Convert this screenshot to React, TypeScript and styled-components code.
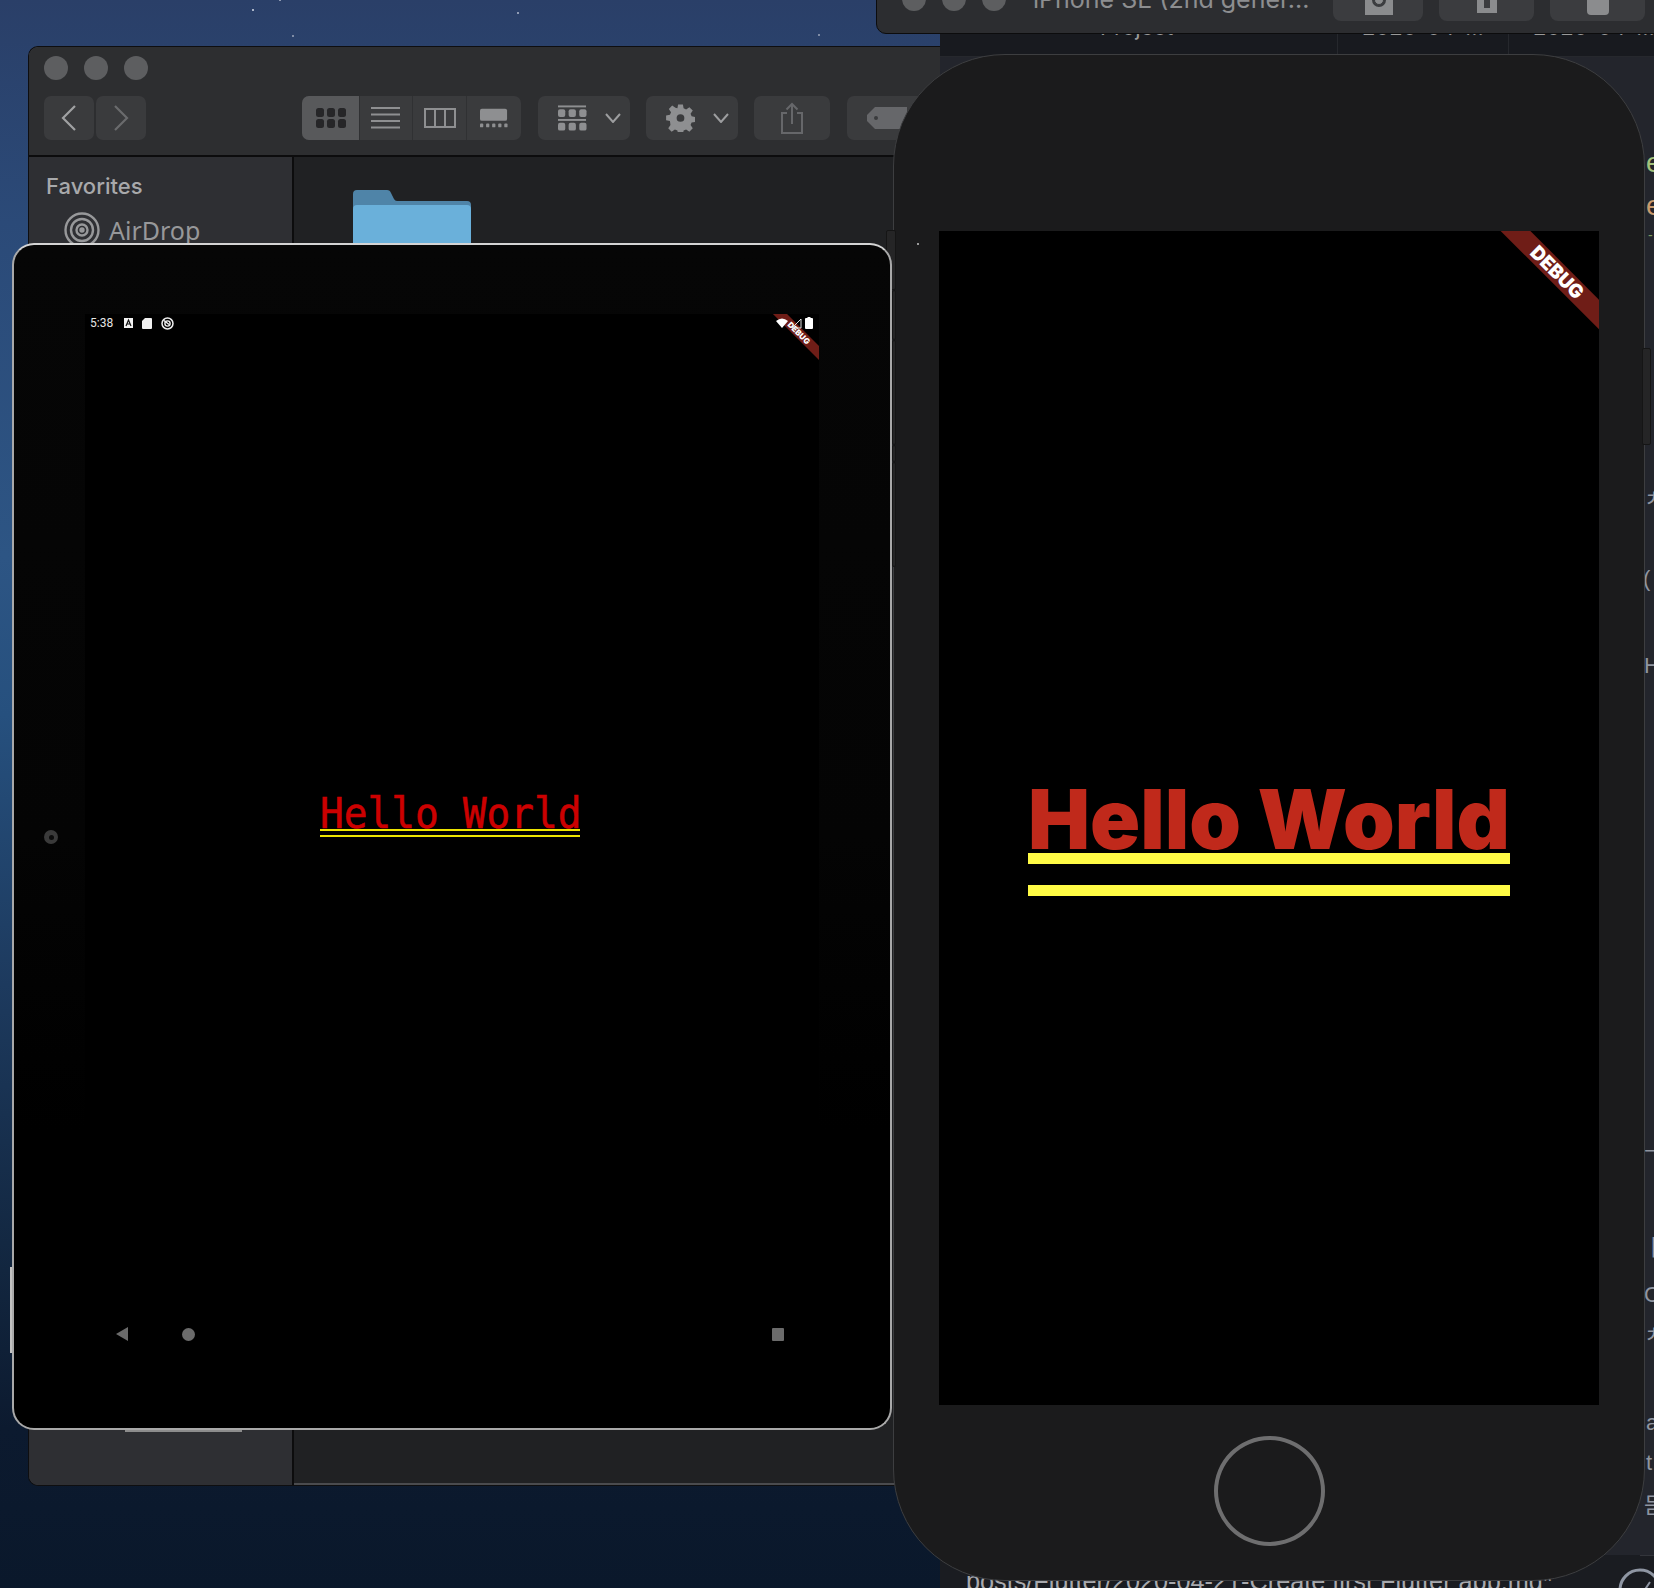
import React from "react";
import styled, { createGlobalStyle } from "styled-components";

const Global = createGlobalStyle`
  html, body { margin: 0; padding: 0; background: #0c192c; }
  body { font-family: "Inter", "Liberation Sans", sans-serif; }
`;

const Desktop = styled.div`
  position: relative;
  width: 1654px;
  height: 1588px;
  overflow: hidden;
  background:
    radial-gradient(circle at 253px 10px, #aab4c8 1px, transparent 1.5px),
    radial-gradient(circle at 518px 13px, #8f9bb3 1px, transparent 1.5px),
    radial-gradient(circle at 293px 36px, #7f8ca6 1px, transparent 1.5px),
    radial-gradient(circle at 819px 35px, #7f8ca6 1px, transparent 1.5px),
    radial-gradient(circle at 280px 0px, #8f9bb3 1px, transparent 1.5px),
    linear-gradient(180deg, #2a3f68 0%, #2b4a78 14%, #2d5584 35%, #26507e 45%, #1d3a5e 62%, #12263f 80%, #0c1a2f 90%, #0a182b 100%);
`;

/* ---------- Editor behind ---------- */
const EditorWindow = styled.div`
  position: absolute;
  left: 940px;
  top: 20px;
  width: 714px;
  height: 1568px;
  background: #181a1f;
  display: flex;
  flex-direction: column;
`;
const FileHeader = styled.div`
  flex: 0 0 37px;
  box-sizing: border-box;
  display: grid;
  grid-template-columns: 398px 171px 1fr;
  color: #9a9a9a;
  font-size: 22px;
  border-bottom: 1px solid #26282d;
  line-height: 14px;
`;
const HeaderCell = styled.div<{ $indent: number }>`
  padding-left: ${(p) => p.$indent}px;
  border-right: 1px solid #26282d;
  white-space: nowrap;
`;
const EditorBody = styled.div`
  flex: 1;
  position: relative;
  background: linear-gradient(180deg, #23252c 0, #23252c 1498px, #1a1c21 1498px);
  overflow: hidden;
`;
const EdgeGlyph = styled.span<{ $x: number; $y: number; $c: string; $s?: number }>`
  position: absolute;
  left: ${(p) => p.$x}px;
  top: ${(p) => p.$y}px;
  color: ${(p) => p.$c};
  font-family: "Liberation Sans", "Noto Sans CJK KR", sans-serif;
  font-size: ${(p) => p.$s ?? 22}px;
  line-height: 1;
`;
const PathLine = styled.div`
  position: absolute;
  left: 26px;
  top: 1510px;
  font-family: "Liberation Sans", sans-serif;
  font-size: 25.25px;
  color: #a8a9ad;
  white-space: nowrap;
  line-height: 28px;
`;
const StatusDivider = styled.div`
  position: absolute;
  left: 700px;
  top: 1498px;
  width: 20px;
  height: 1px;
  background: #33353b;
`;
const StatusCheck = styled.div`
  position: absolute;
  left: 678px;
  top: 1511px;
`;

/* ---------- iOS simulator title bar ---------- */
const SimBar = styled.div`
  position: absolute;
  left: 876px;
  top: -30px;
  width: 790px;
  height: 64px;
  box-sizing: border-box;
  background: #2c2d30;
  border: 1px solid #0c0c0d;
  border-radius: 10px;
  display: flex;
  align-items: flex-start;
  padding: 16px 0 0 25px;
`;
const Lights = styled.div<{ $gap: number }>`
  display: flex;
  gap: ${(p) => p.$gap}px;
  flex-shrink: 0;
`;
const Light = styled.span<{ $c: string }>`
  display: block;
  width: 24px;
  height: 24px;
  border-radius: 50%;
  background: ${(p) => p.$c};
`;
const SimTitle = styled.div`
  margin-left: 27px;
  width: 300px;
  flex-shrink: 0;
  font-size: 25px;
  line-height: 30px;
  margin-top: -3px;
  color: #8d8e90;
  white-space: nowrap;
`;
const SimButtons = styled.div`
  margin-left: 0;
  margin-top: -16px;
  display: flex;
  gap: 16px;
`;
const SimButton = styled.div<{ $w: number; $pb?: number }>`
  width: ${(p) => p.$w}px;
  height: 50px;
  border-radius: 8px;
  background: #3b3c3f;
  display: flex;
  align-items: flex-end;
  justify-content: center;
  padding-bottom: ${(p) => p.$pb ?? 6}px;
  box-sizing: border-box;
`;

/* ---------- Finder ---------- */
const Finder = styled.div`
  position: absolute;
  left: 28px;
  top: 46px;
  width: 912px;
  height: 1440px;
  box-sizing: border-box;
  border-radius: 10px 0 0 10px;
  border: 1px solid #0e0e10;
  border-right: none;
  box-shadow: inset 0 2px 0 #55565a, inset 0 -2px 0 #4a4b4e;
  overflow: hidden;
  display: flex;
  flex-direction: column;
  background: #202123;
`;
const FinderHeader = styled.div`
  flex: 0 0 110px;
  box-sizing: border-box;
  background: #2d2e30;
  border-bottom: 2px solid #0c0c0d;
  padding: 9px 0 0 15px;
  display: flex;
  flex-direction: column;
  gap: 16px;
`;
const Toolbar = styled.div`
  display: flex;
  align-items: center;
  height: 44px;
`;
const ToolButton = styled.div<{ $w: number; $mr?: number; $pl?: number }>`
  flex: 0 0 ${(p) => p.$w}px;
  height: 44px;
  box-sizing: border-box;
  margin-right: ${(p) => p.$mr ?? 0}px;
  padding-left: ${(p) => p.$pl ?? 0}px;
  background: #3a3b3d;
  border-radius: 7px;
  display: flex;
  align-items: center;
  justify-content: ${(p) => (p.$pl ? "flex-start" : "center")};
  gap: 18px;
`;
const Segmented = styled.div`
  display: flex;
  margin: 0 17px 0 0;
  height: 44px;
  border-radius: 7px;
  overflow: hidden;
  background: #3a3b3d;
`;
const Segment = styled.div<{ $w: number; $active?: boolean }>`
  width: ${(p) => p.$w}px;
  box-sizing: border-box;
  display: flex;
  align-items: center;
  justify-content: center;
  background: ${(p) => (p.$active ? "#58595b" : "transparent")};
  border-right: 1px solid #303133;
  &:last-child { border-right: none; }
`;
const FinderBody = styled.div`
  flex: 1;
  display: flex;
  min-height: 0;
`;
const Sidebar = styled.div`
  flex: 0 0 265px;
  box-sizing: border-box;
  background: #2e2f33;
  border-right: 2px solid #0c0c0d;
  padding: 16px 0 0 17px;
  color: #a5a6a8;
`;
const SideTitle = styled.div`
  font-size: 22px;
  font-weight: 500;
  line-height: 26px;
  color: #a8a9ab;
`;
const SideItem = styled.div`
  display: flex;
  align-items: center;
  gap: 9px;
  margin: 13px 0 0 18px;
  font-size: 25px;
  font-family: "Noto Sans", "Inter", sans-serif;
  line-height: 36px;
  color: #97989a;
`;
const FinderContent = styled.div`
  flex: 1;
  padding: 33px 0 0 59px;
`;

/* ---------- Android emulator ---------- */
const AndroidShell = styled.div`
  position: absolute;
  left: 12px;
  top: 243px;
  width: 880px;
  height: 1187px;
  box-sizing: border-box;
  padding: 69px 71px 0 71px;
  background: linear-gradient(180deg, #060606 0%, #040404 50%, #000 75%);
  border: 2px solid #a9a9a9;
  border-top-color: #d4d4d4;
  border-radius: 22px;
  display: flex;
`;
const SideBarMark = styled.div`
  position: absolute;
  left: -4px;
  top: 1022px;
  width: 2px;
  height: 86px;
  background: #c2c2c2;
`;
const BottomMark = styled.div`
  position: absolute;
  left: 111px;
  bottom: -4px;
  width: 117px;
  height: 2px;
  background: #8c8c8c;
`;
const CameraDot = styled.div`
  position: absolute;
  left: 30px;
  top: 585px;
  width: 14px;
  height: 14px;
  border-radius: 50%;
  background: #3a3a3a;
  display: flex;
  align-items: center;
  justify-content: center;
  &::after {
    content: "";
    width: 5px;
    height: 5px;
    border-radius: 50%;
    background: #0c0c0c;
  }
`;
const AndroidScreen = styled.div`
  position: relative;
  flex: 1;
  height: 1040px;
  background: #000;
  display: flex;
  flex-direction: column;
`;
const StatusBar = styled.div`
  flex: 0 0 18px;
  position: relative;
  z-index: 1;
  display: flex;
  align-items: center;
  justify-content: space-between;
  padding: 0 6px 0 5px;
`;
const StatusGroup = styled.div<{ $gap: number }>`
  display: flex;
  align-items: center;
  gap: ${(p) => p.$gap}px;
`;
const StatusTime = styled.span`
  font-family: "Roboto", sans-serif;
  font-size: 12px;
  color: #e6e6e6;
  margin-right: 2px;
`;
const AndroidCenter = styled.div`
  flex: 1;
  display: flex;
  align-items: center;
  justify-content: center;
  padding: 0 4px 32px 0;
`;
const MonoHello = styled.div`
  font-family: "DejaVu Sans Mono", "Liberation Mono", monospace;
  font-size: 39.5px;
  line-height: 39px;
  color: #cc0000;
  border-bottom: 2px solid #ece400;
  position: relative;
  width: 260px;
  white-space: nowrap;
  height: 40px;
  &::after {
    content: "";
    position: absolute;
    left: 0;
    right: 0;
    bottom: -8px;
    height: 2px;
    background: #ece400;
  }
`;
const MonoText = styled.span`
  display: block;
  -webkit-text-stroke: 0.5px #cc0000;
  transform: translateY(6px) scaleY(1.09);
  transform-origin: 50% 80%;
`;
const AndroidNav = styled.div`
  flex: 0 0 30px;
  display: flex;
  align-items: center;
  padding: 0 35px 5px 31px;
  gap: 54px;
`;
const NavSpacer = styled.div`
  flex: 1;
`;
const Ribbon = styled.div<{ $size: number }>`
  position: absolute;
  top: 0;
  right: 0;
  width: ${(p) => p.$size}px;
  height: ${(p) => p.$size}px;
  overflow: hidden;
  pointer-events: none;
`;
const RibbonBand = styled.div<{ $cx: number; $cy: number; $w: number; $h: number; $fs: number }>`
  position: absolute;
  left: ${(p) => p.$cx - p.$w / 2}px;
  top: ${(p) => p.$cy - p.$h / 2}px;
  width: ${(p) => p.$w}px;
  height: ${(p) => p.$h}px;
  transform: rotate(45deg);
  background: #6f1d17;
  color: #fff;
  font-family: "Inter", "Liberation Sans", sans-serif;
  font-weight: 900;
  font-size: ${(p) => p.$fs}px;
  line-height: ${(p) => p.$h}px;
  text-align: center;
`;

/* ---------- iPhone simulator ---------- */
const IPhone = styled.div`
  position: absolute;
  left: 893px;
  top: 54px;
  width: 752px;
  height: 1527px;
  box-sizing: border-box;
  background: #1b1b1c;
  border: 1px solid #3d3e40;
  border-radius: 112px;
  display: flex;
  flex-direction: column;
  align-items: center;
  padding-top: 176px;
`;
const SideButton = styled.div<{ $x: number; $y: number; $w: number; $h: number }>`
  position: absolute;
  left: ${(p) => p.$x}px;
  top: ${(p) => p.$y}px;
  width: ${(p) => p.$w}px;
  height: ${(p) => p.$h}px;
  background: #252526;
  border-radius: 2px;
  border: 1px solid #151515;
  box-sizing: border-box;
`;
const Speck = styled.div`
  position: absolute;
  left: 23px;
  top: 188px;
  width: 2px;
  height: 2px;
  background: #9a9a9a;
`;
const PhoneScreen = styled.div`
  position: relative;
  flex: 0 0 1174px;
  width: 660px;
  background: #000;
  display: flex;
  flex-direction: column;
  align-items: center;
  justify-content: center;
  padding-top: 8px;
  box-sizing: border-box;
`;
const BigHello = styled.div`
  width: 482px;
  box-sizing: border-box;
  text-align: center;
  color: #c0291b;
  font-family: "Inter", "Liberation Sans", sans-serif;
  font-weight: 900;
  font-size: 82.8px;
  line-height: 76px;
  white-space: nowrap;
  border-bottom: 11px solid #fffb45;
  position: relative;
  height: 83px;
  &::after {
    content: "";
    position: absolute;
    left: 0;
    right: 0;
    bottom: -43px;
    height: 11px;
    background: #fffb45;
  }
`;
const HomeButton = styled.div`
  margin-top: 31px;
  width: 111px;
  height: 110px;
  box-sizing: border-box;
  border: 4px solid #6e6e6f;
  border-radius: 50%;
`;

/* ---------- icons ---------- */
const stroke = "#8e8f91";

const GridIcon = () => (
  <svg width="30" height="20" viewBox="0 0 30 20" fill="#262628">
    {[0, 11, 22].map((x) =>
      [0, 11].map((y) => <rect key={`${x}-${y}`} x={x} y={y} width="8" height="9" rx="2.5" />)
    )}
  </svg>
);
const ListIcon = () => (
  <svg width="30" height="22" viewBox="0 0 30 22" fill={stroke}>
    {[0, 6.5, 13, 19.5].map((y) => (
      <rect key={y} x="0" y={y} width="29" height="2" />
    ))}
  </svg>
);
const ColumnsIcon = () => (
  <svg width="32" height="20" viewBox="0 0 32 20" fill="none" stroke={stroke} strokeWidth="2">
    <rect x="1" y="1" width="30" height="18" />
    <path d="M11 1v18M21 1v18" />
  </svg>
);
const GalleryIcon = () => (
  <svg width="28" height="20" viewBox="0 0 30 20" fill={stroke}>
    <rect x="0" y="0" width="29" height="13" rx="2" />
    {[0, 6.5, 13, 19.5, 26].map((x) => (
      <rect key={x} x={x} y="16" width="3.5" height="4" rx="1" />
    ))}
  </svg>
);
const GroupIcon = () => (
  <svg width="29" height="26" viewBox="0 0 30 26" fill={stroke}>
    <rect x="0" y="0" width="29" height="2" />
    <rect x="0" y="14" width="29" height="2" />
    {[0, 11, 22].map((x) => (
      <React.Fragment key={x}>
        <rect x={x} y="4" width="7.5" height="8" rx="2" />
        <rect x={x} y="18" width="7.5" height="8" rx="2" />
      </React.Fragment>
    ))}
  </svg>
);
const Chevron = () => (
  <svg width="16" height="10" viewBox="0 0 16 10" fill="none" stroke="#9c9d9f" strokeWidth="2">
    <path d="M1 1l7 8 7-8" />
  </svg>
);
const GearIcon = () => (
  <svg width="29" height="28" viewBox="-1 0 30 28" fill={stroke}>
    <path
      fillRule="evenodd"
      d="M11.5 0h5l.7 4 2.6 1.1 3.4-2.3 3.5 3.5-2.3 3.4 1.1 2.6 4 .7v5l-4 .7-1.1 2.6 2.3 3.4-3.5 3.5-3.4-2.3-2.6 1.1-.7 4h-5l-.7-4-2.6-1.1-3.4 2.3-3.5-3.5 2.3-3.4L3.1 17l-4-.7v-5l4-.7 1.1-2.6-2.3-3.4 3.5-3.5 3.4 2.3L10.8 4zM14 10a4 4 0 1 0 0 8 4 4 0 0 0 0-8z"
    />
  </svg>
);
const ShareIcon = () => (
  <svg width="24" height="32" viewBox="0 0 24 32" fill="none" stroke="#66676a" strokeWidth="2">
    <path d="M7 11H2v20h20V11h-5M12 22V2M6.5 7.5L12 2l5.5 5.5" />
  </svg>
);
const TagIcon = () => (
  <svg width="40" height="22" viewBox="0 0 40 22" fill="#66676a">
    <path fillRule="evenodd" d="M8 0h32v22H8L0 14V8zM9 9a2 2 0 1 0 0 4 2 2 0 0 0 0-4z" />
  </svg>
);
const BackIcon = ({ c, flip }: { c: string; flip?: boolean }) => (
  <svg width="16" height="26" viewBox="0 0 16 26" fill="none" stroke={c} strokeWidth="2.2" style={flip ? { transform: "scaleX(-1)" } : undefined}>
    <path d="M14 1L2 13l12 12" />
  </svg>
);
const AirDropIcon = () => (
  <svg width="36" height="36" viewBox="0 0 36 36" fill="none" stroke="#97989a" strokeWidth="2.4">
    <circle cx="18" cy="18" r="16.5" />
    <circle cx="18" cy="18" r="11" />
    <circle cx="18" cy="18" r="5.5" />
    <circle cx="18" cy="18" r="1.5" fill="#97989a" />
  </svg>
);
const FolderIcon = () => (
  <svg width="118" height="53" viewBox="0 0 118 53">
    <path d="M4 0h30q3 0 4 3l3 6q1 2 3 2h70q4 0 4 4v20H0V4q0-4 4-4z" fill="#4f84a8" />
    <path d="M4 15h110q4 0 4 4v34H0V19q0-4 4-4z" fill="#6ab0da" />
  </svg>
);
const AIcon = () => (
  <svg width="9" height="10" viewBox="0 0 9 10">
    <rect width="9" height="10" fill="#f2f2f2" />
    <path d="M2 8l2.5-6L7 8M3 6h3" fill="none" stroke="#111" strokeWidth="1.2" />
  </svg>
);
const SdIcon = () => (
  <svg width="10" height="11" viewBox="0 0 10 11" fill="#f0f0f0">
    <path d="M3 0h6a1 1 0 0 1 1 1v9a1 1 0 0 1-1 1H1a1 1 0 0 1-1-1V3z" />
  </svg>
);
const SyncIcon = () => (
  <svg width="13" height="13" viewBox="0 0 13 13" fill="none" stroke="#eee">
    <circle cx="6.5" cy="6.5" r="5.5" strokeWidth="1.5" />
    <circle cx="6.5" cy="6.5" r="2.6" strokeWidth="1.4" />
    <path d="M3 3.5l5 4" strokeWidth="1.5" />
  </svg>
);
const WifiIcon = () => (
  <svg width="12" height="10" viewBox="0 0 12 10" fill="#fff">
    <path d="M0 3Q6-2 12 3L6 10z" />
  </svg>
);
const SignalIcon = () => (
  <svg width="11" height="11" viewBox="0 0 11 11" fill="none" stroke="#ddd">
    <path d="M10 1v9H1z" />
  </svg>
);
const BatteryIcon = () => (
  <svg width="8" height="12" viewBox="0 0 8 12" fill="#fff">
    <path d="M2.5 0h3v1H7a1 1 0 0 1 1 1v9a1 1 0 0 1-1 1H1a1 1 0 0 1-1-1V2a1 1 0 0 1 1-1h1.5z" />
  </svg>
);
const NavBack = () => (
  <svg width="12" height="14" viewBox="0 0 12 14" fill="#6b6b6b">
    <path d="M12 0v14L0 7z" />
  </svg>
);
const NavHome = () => (
  <svg width="13" height="13" viewBox="0 0 13 13" fill="#6b6b6b">
    <circle cx="6.5" cy="6.5" r="6.5" />
  </svg>
);
const NavRecent = () => (
  <svg width="12" height="13" viewBox="0 0 12 13" fill="#6b6b6b">
    <rect width="12" height="13" rx="1" />
  </svg>
);
const CameraIcon = () => (
  <svg width="34" height="36" viewBox="0 0 34 36" fill="#8b8c8e">
    <path fillRule="evenodd" d="M0 0h6v6H0zM8 6h24v30H4V10q0-4 4-4zM18 14a7 7 0 1 0 0 14 7 7 0 0 0 0-14z" />
    <circle cx="18" cy="21" r="4.5" fill="#8b8c8e" stroke="#3b3c3f" strokeWidth="1" />
  </svg>
);
const HomeGlyph = () => (
  <svg width="20" height="24" viewBox="0 0 20 24" fill="#8b8c8e">
    <path fillRule="evenodd" d="M0 0h20v24H0zM7 8v11h6V8z" />
  </svg>
);
const RotateGlyph = () => (
  <svg width="22" height="24" viewBox="0 0 22 24" fill="#8b8c8e">
    <path d="M0 0h22v20q0 4-4 4H4q-4 0-4-4z" />
  </svg>
);
const CheckCircle = () => (
  <svg width="44" height="44" viewBox="0 0 44 44" fill="none" stroke="#8f96a3" strokeWidth="3">
    <circle cx="22" cy="22" r="20" />
    <path d="M12 22l8 10 12-18" strokeWidth="2" />
  </svg>
);

const glyphColor = "#9095a0";

export default function App() {
  return (
    <Desktop>
      <Global />

      <EditorWindow>
        <FileHeader>
          <HeaderCell $indent={160}>Project</HeaderCell>
          <HeaderCell $indent={24}>2020-04-...</HeaderCell>
          <HeaderCell $indent={24}>2020-04-...</HeaderCell>
        </FileHeader>
        <EditorBody>
          <EdgeGlyph $x={706} $y={92} $c="#a3c27c" $s={28}>e</EdgeGlyph>
          <EdgeGlyph $x={706} $y={135} $c="#c89a6c" $s={28}>e</EdgeGlyph>
          <EdgeGlyph $x={708} $y={171} $c="#7d9a5e" $s={14}>-</EdgeGlyph>
          <EdgeGlyph $x={704} $y={431} $c={glyphColor}>ㅊ</EdgeGlyph>
          <EdgeGlyph $x={703} $y={511} $c={glyphColor}>(</EdgeGlyph>
          <EdgeGlyph $x={704} $y={598} $c={glyphColor}>H</EdgeGlyph>
          <EdgeGlyph $x={704} $y={1084} $c={glyphColor}>ㅡ</EdgeGlyph>
          <EdgeGlyph $x={704} $y={1180} $c={glyphColor}>ㅏ</EdgeGlyph>
          <EdgeGlyph $x={704} $y={1227} $c={glyphColor}>C</EdgeGlyph>
          <EdgeGlyph $x={704} $y={1267} $c={glyphColor}>ㅊ</EdgeGlyph>
          <EdgeGlyph $x={706} $y={1355} $c={glyphColor}>a</EdgeGlyph>
          <EdgeGlyph $x={706} $y={1395} $c={glyphColor}>t</EdgeGlyph>
          <EdgeGlyph $x={704} $y={1438} $c={glyphColor}>믐</EdgeGlyph>
          <PathLine>posts/Flutter/2020-04-21-Create first Flutter app.md*</PathLine>
          <StatusDivider />
          <StatusCheck>
            <CheckCircle />
          </StatusCheck>
        </EditorBody>
      </EditorWindow>

      <SimBar>
        <Lights $gap={16}>
          <Light $c="#5d5e60" />
          <Light $c="#5d5e60" />
          <Light $c="#5d5e60" />
        </Lights>
        <SimTitle>iPhone SE (2nd gener...</SimTitle>
        <SimButtons>
          <SimButton $w={90}><CameraIcon /></SimButton>
          <SimButton $w={95} $pb={8}><HomeGlyph /></SimButton>
          <SimButton $w={95}><RotateGlyph /></SimButton>
        </SimButtons>
      </SimBar>

      <Finder>
        <FinderHeader>
          <Lights $gap={16}>
            <Light $c="#5d5e60" />
            <Light $c="#5d5e60" />
            <Light $c="#5d5e60" />
          </Lights>
          <Toolbar>
            <ToolButton $w={50} $mr={2}><BackIcon c="#a0a1a3" /></ToolButton>
            <ToolButton $w={50} $mr={156}><BackIcon c="#6a6b6d" flip /></ToolButton>
            <Segmented>
              <Segment $w={58} $active><GridIcon /></Segment>
              <Segment $w={53}><ListIcon /></Segment>
              <Segment $w={54}><ColumnsIcon /></Segment>
              <Segment $w={54}><GalleryIcon /></Segment>
            </Segmented>
            <ToolButton $w={92} $mr={16} $pl={20}><GroupIcon /><Chevron /></ToolButton>
            <ToolButton $w={92} $mr={16} $pl={20}><GearIcon /><Chevron /></ToolButton>
            <ToolButton $w={76} $mr={17}><ShareIcon /></ToolButton>
            <ToolButton $w={80}><TagIcon /></ToolButton>
          </Toolbar>
        </FinderHeader>
        <FinderBody>
          <Sidebar>
            <SideTitle>Favorites</SideTitle>
            <SideItem><AirDropIcon />AirDrop</SideItem>
          </Sidebar>
          <FinderContent><FolderIcon /></FinderContent>
        </FinderBody>
      </Finder>

      <IPhone>
        <SideButton $x={-8} $y={175} $w={10} $h={60} />
        <SideButton $x={-2} $y={235} $w={4} $h={50} />
        <SideButton $x={-2} $y={285} $w={4} $h={105} />
        <SideButton $x={-2} $y={390} $w={4} $h={17} />
        <SideButton $x={-2} $y={407} $w={4} $h={105} />
        <SideButton $x={748} $y={293} $w={9} $h={97} />
        <Speck />
        <PhoneScreen>
          <BigHello>Hello World</BigHello>
          <Ribbon $size={99}>
            <RibbonBand $cx={57} $cy={41} $w={170} $h={21} $fs={19}>DEBUG</RibbonBand>
          </Ribbon>
        </PhoneScreen>
        <HomeButton />
      </IPhone>

      <AndroidShell>
        <SideBarMark />
        <BottomMark />
        <CameraDot />
        <AndroidScreen>
          <StatusBar>
            <StatusGroup $gap={9}>
              <StatusTime>5:38</StatusTime>
              <AIcon />
              <SdIcon />
              <SyncIcon />
            </StatusGroup>
            <StatusGroup $gap={3}>
              <WifiIcon />
              <SignalIcon />
              <BatteryIcon />
            </StatusGroup>
          </StatusBar>
          <AndroidCenter>
            <MonoHello><MonoText>Hello World</MonoText></MonoHello>
          </AndroidCenter>
          <AndroidNav>
            <NavBack />
            <NavHome />
            <NavSpacer />
            <NavRecent />
          </AndroidNav>
          <Ribbon $size={47}>
            <RibbonBand $cx={27} $cy={19} $w={80} $h={10} $fs={8}>DEBUG</RibbonBand>
          </Ribbon>
        </AndroidScreen>
      </AndroidShell>
    </Desktop>
  );
}
